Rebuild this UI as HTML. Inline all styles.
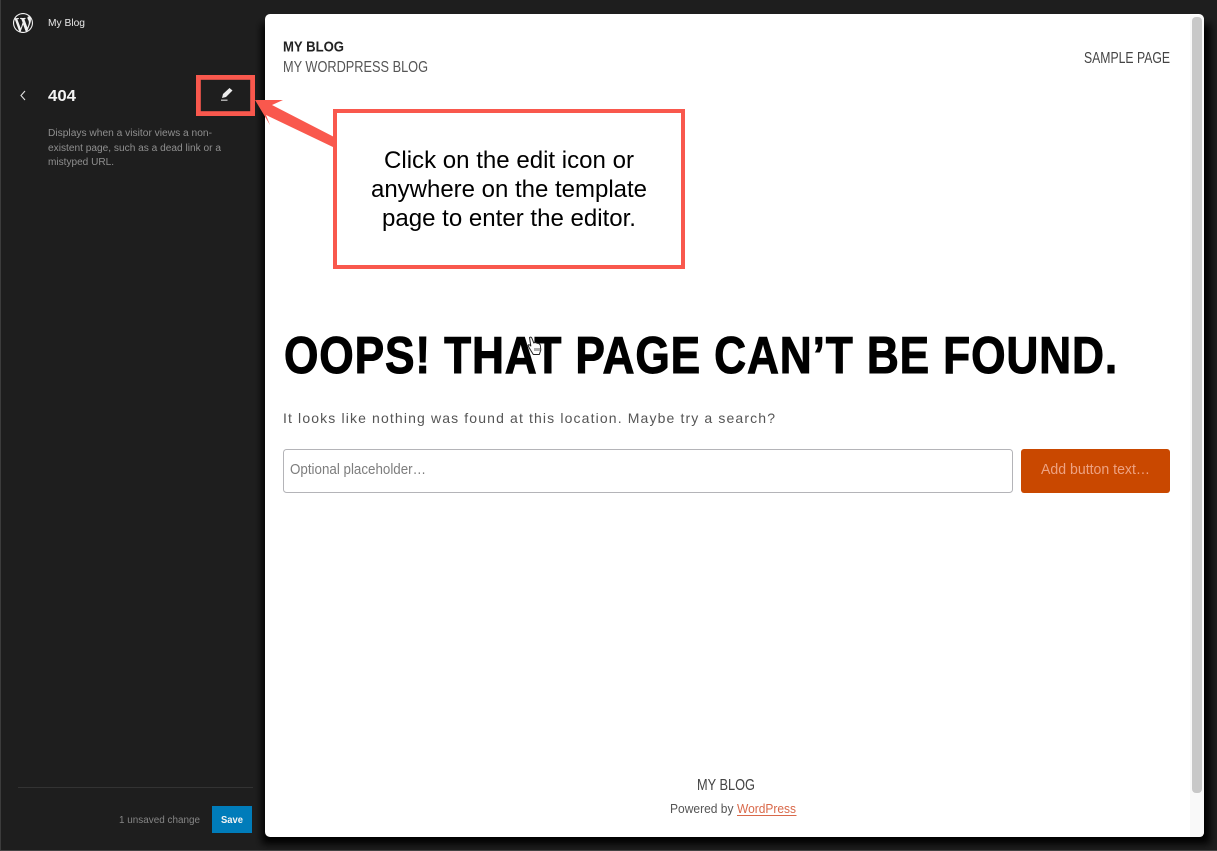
<!DOCTYPE html>
<html lang="en">
<head>
<meta charset="utf-8">
<title>My Blog - 404</title>
<style>
html,body{margin:0;padding:0;width:1217px;height:851px;overflow:hidden;background:#1e1e1e}
svg{display:block}
text{font-family:"Liberation Sans",sans-serif}
.soft{filter:blur(.35px)}
</style>
</head>
<body>
<svg width="1217" height="851" viewBox="0 0 1217 851" xmlns="http://www.w3.org/2000/svg">
<defs>
<filter id="shadow" x="-5%" y="-5%" width="110%" height="110%"><feGaussianBlur stdDeviation="4"/></filter>
</defs>
<rect width="1217" height="851" fill="#1e1e1e"/>
<rect x="0" y="0" width="1" height="851" fill="#3c3c3c"/>
<rect x="0" y="850" width="1217" height="1" fill="#444"/>
<rect x="262" y="24" width="948" height="820" fill="#000" filter="url(#shadow)"/>

<g class="soft">
<!-- WordPress logo -->
<g transform="translate(13,13)" fill="#f0f0f0">
<path d="M20 10c0-5.51-4.49-10-10-10C4.48 0 0 4.49 0 10c0 5.52 4.48 10 10 10 5.51 0 10-4.48 10-10zM7.78 15.37L4.37 6.22c.55-.02 1.17-.08 1.17-.08.5-.06.44-1.13-.06-1.11 0 0-1.45.11-2.37.11-.18 0-.37 0-.58-.01C4.12 2.69 6.87 1.11 10 1.11c2.33 0 4.45.87 6.05 2.34-.68-.11-1.65.39-1.65 1.58 0 .74.45 1.36.9 2.1.35.61.55 1.36.55 2.46 0 1.49-1.4 5-1.4 5l-3.03-8.37c.54-.02.82-.17.82-.17.5-.05.44-1.25-.06-1.22 0 0-1.44.12-2.38.12-.87 0-2.33-.12-2.33-.12-.5-.03-.56 1.2-.06 1.22l.92.08 1.26 3.41zM17.41 10c.24-.64.74-1.87.43-4.25.7 1.29 1.05 2.71 1.05 4.25 0 3.29-1.73 6.24-4.4 7.78.97-2.59 1.94-5.2 2.92-7.78zM6.1 18.09C3.12 16.65 1.11 13.53 1.11 10c0-1.3.23-2.48.72-3.59C3.25 10.3 4.67 14.2 6.1 18.09zm4.03-6.63l2.58 6.98c-.86.29-1.76.45-2.71.45-.79 0-1.57-.11-2.29-.33.81-2.38 1.62-4.74 2.42-7.1z"/>
</g>

<!-- Sidebar -->
<text x="48" y="26" font-size="10.500" fill="#e8e8e8" textLength="37" lengthAdjust="spacingAndGlyphs">My Blog</text>
<path d="M25 91l-4 4.500 4 4.500" fill="none" stroke="#e0e0e0" stroke-width="1.100"/>
<text x="48" y="101" font-size="16" font-weight="700" fill="#f4f4f4" textLength="28" lengthAdjust="spacingAndGlyphs">404</text>
<g fill="#8f8f8f" font-size="10">
<text x="48" y="136" textLength="164" lengthAdjust="spacingAndGlyphs">Displays when a visitor views a non-</text>
<text x="48" y="151" textLength="173" lengthAdjust="spacingAndGlyphs">existent page, such as a dead link or a</text>
<text x="48" y="165" textLength="66" lengthAdjust="spacingAndGlyphs">mistyped URL.</text>
</g>
<!-- pencil -->
<polygon points="222,98 223,94 229.500,88 232.500,90.500 226,97" fill="#ececec"/>
<rect x="221" y="99.500" width="6.500" height="1.500" fill="#aaa"/>

<rect x="18" y="787" width="235" height="1" fill="#333"/>
<text x="119" y="823" font-size="10" fill="#858585" textLength="81" lengthAdjust="spacingAndGlyphs">1 unsaved change</text>
<rect x="212" y="806" width="40" height="27" fill="#007cba"/>
<text x="221" y="823" font-size="10" font-weight="700" fill="#f4f4f4" textLength="22" lengthAdjust="spacingAndGlyphs">Save</text>
</g>

<!-- Preview -->
<rect x="265" y="14" width="939" height="823" rx="5" fill="#fff"/>
<path d="M1190 15h9q5 0 5 5v812q0 5-5 5h-9z" fill="#f9f9f9"/>
<rect x="1192" y="17" width="10" height="776" rx="4" fill="#c8c8c8"/>

<g class="soft">
<text x="283" y="51.500" font-size="15" font-weight="700" fill="#222" textLength="61" lengthAdjust="spacingAndGlyphs">MY BLOG</text>
<text x="283" y="72" font-size="15.500" fill="#555" textLength="145" lengthAdjust="spacingAndGlyphs">MY WORDPRESS BLOG</text>
<text x="1084" y="63" font-size="15.500" fill="#444" textLength="86" lengthAdjust="spacingAndGlyphs">SAMPLE PAGE</text>

<text x="284" y="373" font-size="52" font-weight="700" letter-spacing="1" fill="#000" stroke="#000" stroke-width="1" textLength="834" lengthAdjust="spacingAndGlyphs">OOPS! THAT PAGE CAN’T BE FOUND.</text>
<text x="283" y="423" font-size="14" fill="#555" textLength="492" lengthAdjust="spacing">It looks like nothing was found at this location. Maybe try a search?</text>

<rect x="283.500" y="449.500" width="729" height="43" rx="3" fill="#fff" stroke="#b4b4b8"/>
<text x="290" y="474" font-size="15" fill="#7d7d7d" textLength="136" lengthAdjust="spacingAndGlyphs">Optional placeholder…</text>
<rect x="1021" y="449" width="149" height="44" rx="3" fill="#c94800"/>
<text x="1041" y="474" font-size="15" fill="#eda282" textLength="109" lengthAdjust="spacingAndGlyphs">Add button text…</text>

<text x="697" y="790" font-size="15.500" fill="#444" textLength="58" lengthAdjust="spacingAndGlyphs">MY BLOG</text>
<text x="670" y="813" font-size="12.500" fill="#555" textLength="63.500" lengthAdjust="spacingAndGlyphs">Powered by</text>
<text x="737" y="813" font-size="12.500" fill="#d9694a" textLength="59" lengthAdjust="spacingAndGlyphs">WordPress</text>
<rect x="737" y="815" width="59.500" height="1" fill="#d9694a"/>
</g>

<!-- Cursor -->
<g transform="translate(528,336)">
<path d="M1.500 1.500q1.500-1 2.300.5l2 5 .7-.5 1.500.3 1 .4 1.800.3 1.500 1.500.5 5-1.500 4.500h-6l-4-6.500-1.200-2.500q.3-1.200 1.700-.5l1 1z" fill="#fff" stroke="#222" stroke-width="1" stroke-linejoin="round"/>
<path d="M7 12v3M9 12v3M11 12v3" stroke="#333" stroke-width=".8"/>
</g>

<!-- Annotations -->
<rect x="198.400" y="77.400" width="54.200" height="36.200" fill="none" stroke="#f9584d" stroke-width="4.800"/>
<polygon points="255,100 283,100 272,105 338,139 335,148 266,115 270,125" fill="#f9584d"/>
<rect x="335" y="111" width="348" height="156" fill="#fff" stroke="#f9584d" stroke-width="4"/>
<g font-size="24" fill="#000" text-anchor="start">
<text x="384" y="168" textLength="250" lengthAdjust="spacingAndGlyphs">Click on the edit icon or</text>
<text x="371" y="197" textLength="276" lengthAdjust="spacingAndGlyphs">anywhere on the template</text>
<text x="382" y="226" textLength="254" lengthAdjust="spacingAndGlyphs">page to enter the editor.</text>
</g>
</svg>
</body>
</html>
